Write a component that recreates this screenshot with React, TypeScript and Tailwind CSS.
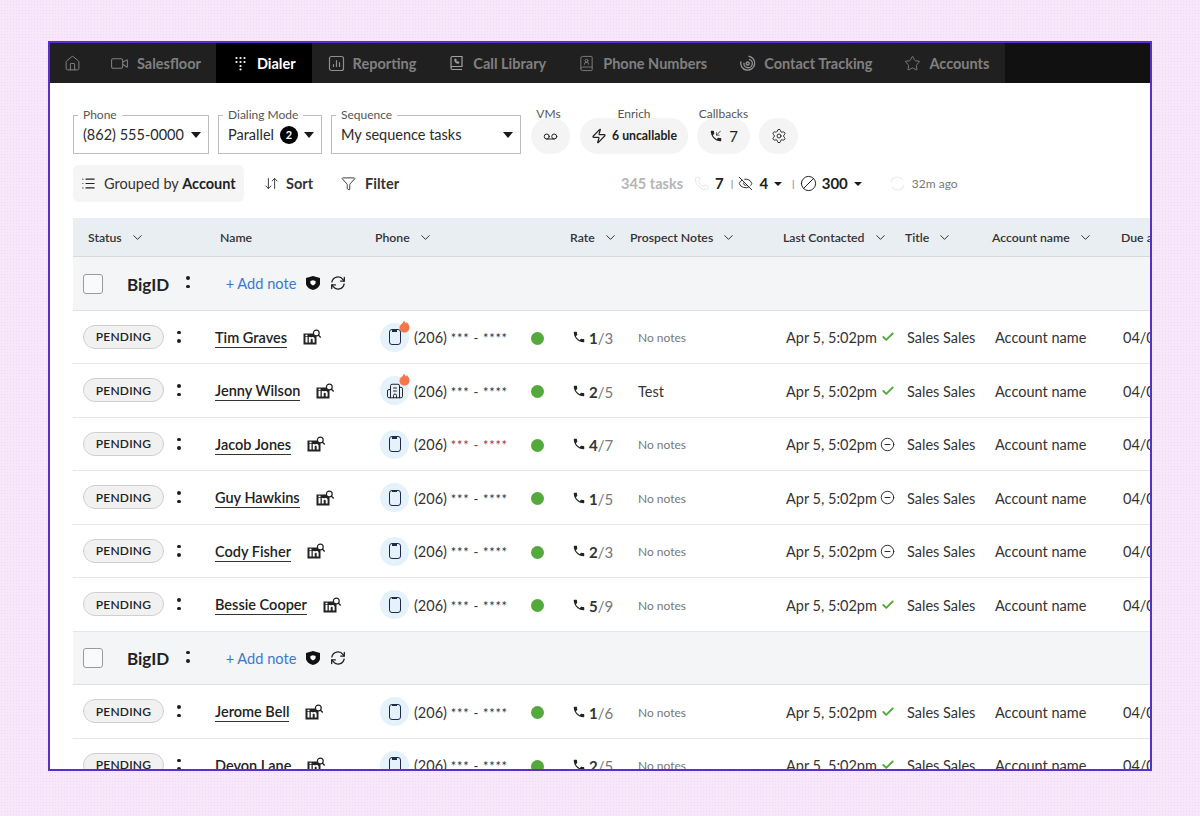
import { ReactNode } from "react";
import { Home, Video, BookUser, Star, Voicemail, Zap, Settings, List, ArrowDownUp, Filter, Building2, ChevronDown, Check, CircleMinus, EyeOff, Ban, Phone } from "lucide-react";
import { MdPhoneCallback, MdPhone } from "react-icons/md";

const Grip = () => (
  <svg width="17" height="17" viewBox="0 0 17 17" fill="white">
    {[3, 7, 11].map((x) => [3, 7].map((y) => <circle key={`${x}-${y}`} cx={x + 1.5} cy={y} r="1.1" />))}
    <circle cx="8.5" cy="11" r="1.1" />
    <circle cx="8.5" cy="14.5" r="1.1" />
  </svg>
);

const ChartBox = () => (
  <svg width="17" height="17" viewBox="0 0 17 17" fill="none" stroke="#909090" strokeWidth="1.2" strokeLinecap="round">
    <rect x="1.5" y="1.500" width="14" height="14" rx="2" />
    <path d="M5.500 11.500v-2M8.500 11.500v-6M11.500 11.500v-4" />
  </svg>
);

const CallBook = () => (
  <svg width="17" height="17" viewBox="0 0 17 17" fill="none" stroke="#a0a0a0" strokeWidth="1.2">
    <path d="M3 13V3a1.5 1.5 0 0 1 1.5-1.5H14v10H4.5A1.5 1.5 0 0 0 3 13a1.5 1.5 0 0 0 1.5 1.5H14" />
    <path d="M6.5 4.500c0 2.500 1.500 4 4 4l.7-1.300-1.600-.8-.6.6c-.5-.3-.8-.7-1-1.100l.6-.6-.8-1.600z" fill="#a0a0a0" strokeWidth="0.5" />
  </svg>
);

const Radar = () => (
  <svg width="17" height="17" viewBox="0 0 17 17" fill="none" stroke="#909090" strokeWidth="1.4">
    <path d="M9.500 1.200a7 7 0 1 1-7.600 5.200" />
    <path d="M10 4.400a4.200 4.200 0 1 1-5 3.400" />
    <circle cx="8.700" cy="8.500" r="1.500" />
  </svg>
);

const Sync = ({ size = 16 }: { size?: number }) => (
  <svg width={size} height={size} viewBox="0 0 17 17" fill="none" stroke="#222" strokeWidth="1.4" strokeLinecap="round" strokeLinejoin="round">
    <path d="M2 7.400a6.600 6.600 0 0 1 11.800-2.600L15 6.400" />
    <path d="M15.200 2.600v3.900h-3.900" />
    <path d="M15 9.600a6.600 6.600 0 0 1-11.800 2.600L2 10.600" />
    <path d="M1.800 14.400v-3.900h3.900" />
  </svg>
);

const Shield = () => (
  <svg width="16" height="16" viewBox="0 0 16 16">
    <path d="M8 1 15 3v5.200c0 3.200-3 5.600-7 6.800-4-1.200-7-3.600-7-6.800V3z" fill="#111" />
    <path d="M8 5.200 10.600 6v1.800c0 1.100-1 1.900-2.600 2.600-1.600-.7-2.600-1.500-2.600-2.600V6z" fill="#fff" />
  </svg>
);

const LinkedInSearch = () => (
  <svg width="19" height="16" viewBox="0 0 19 16" fill="none">
    <rect x="0.500" y="4.500" width="13" height="11" fill="#222" />
    <rect x="2.500" y="8" width="2" height="5.500" fill="#fff" />
    <rect x="2.500" y="5.700" width="2" height="1.600" fill="#fff" />
    <path d="M5.800 13.500V8h1.900v.8c.6-.8 3.900-1.400 3.900 1.300v3.400H9.700v-3c0-1-2-1-2 0v3z" fill="#fff" />
    <circle cx="13.300" cy="4" r="2.900" fill="#fff" stroke="#222" strokeWidth="1.200" />
    <path d="m15.300 6 2.400 2.400" stroke="#222" strokeWidth="1.400" />
  </svg>
);

const Flame = () => (
  <svg className="absolute -top-[3px] left-[19px]" width="11" height="13" viewBox="0 0 11 13">
    <path d="M5 0c.5 2 1 2.400 2 3.400.3-.4.5-.8.6-1.300C9.300 3.500 10.500 5.500 10.500 7.500c0 3-2.300 5-5 5s-5-2-5-4.800C.5 4.500 4.500 3.500 5 0z" fill="#f4764a" />
  </svg>
);

const Dots = () => (
  <span className="flex flex-col gap-[5px]">
    <span className="block h-[3.5px] w-[3.5px] rounded-full bg-[#1c1c1c]" />
    <span className="block h-[3.5px] w-[3.5px] rounded-full bg-[#1c1c1c]" />
  </span>
);

const Caret = () => <span className="inline-block h-0 w-0 border-x-[5px] border-t-[6px] border-x-transparent border-t-[#1a1a1a]" />;
const SmallCaret = () => <span className="inline-block h-0 w-0 border-x-[4px] border-t-[4px] border-x-transparent border-t-[#1a1a1a]" />;

const navItems = [
  { label: "Salesfloor", icon: <Video size={19} strokeWidth={1.3} />, pad: "pl-[16px] pr-[15px]" },
  { label: "Dialer", icon: <Grip />, active: true, pad: "px-[16px]" },
  { label: "Reporting", icon: <ChartBox />, pad: "px-[16px]" },
  { label: "Call Library", icon: <CallBook />, pad: "px-[16px]" },
  { label: "Phone Numbers", icon: <BookUser size={17} strokeWidth={1.3} />, pad: "px-[16px]" },
  { label: "Contact Tracking", icon: <Radar />, pad: "px-[16px]" },
  { label: "Accounts", icon: <Star size={17} strokeWidth={1.3} />, pad: "px-[16px]" },
];

function Nav() {
  return (
    <div className="flex h-[40px] bg-[#111111]">
      <div className="flex w-[44px] items-center justify-center bg-[#202020] pl-[1px] text-[#8a8a8a]">
        <Home size={17} strokeWidth={1.3} />
      </div>
      {navItems.map((n) => (
        <div
          key={n.label}
          className={`flex items-center gap-[8px] pt-[1px] text-[14.5px] font-bold ${n.pad} ${n.active ? "bg-black text-white" : "bg-[#202020] text-[#808080]"}`}
        >
          {n.icon}
          <span>{n.label}</span>
        </div>
      ))}
    </div>
  );
}

function Fieldset({ label, width, children }: { label: string; width: string; children: ReactNode }) {
  return (
    <div className={`relative flex h-[39px] items-center border border-[#bdbdbd] pl-[9px] pr-[7px] pt-[1px] text-[14.5px] text-[#2a2a2a] ${width}`}>
      <span className="absolute -top-[8px] left-[4px] bg-white px-[5px] text-[12px] leading-[14px] text-[#555]">{label}</span>
      {children}
    </div>
  );
}

function Pill({ label, labelPos = "left-0 right-0", className, children }: { label?: string; labelPos?: string; className: string; children: ReactNode }) {
  return (
    <div className={`relative flex h-[36px] items-center justify-center rounded-full bg-[#f4f4f4] text-[#222] ${className}`}>
      {label && <span className={`absolute -top-[11px] whitespace-nowrap text-center text-[12px] font-normal leading-[14px] text-[#555] ${labelPos}`}>{label}</span>}
      {children}
    </div>
  );
}

function Toolbar() {
  return (
    <div className="flex pl-[23px] pt-[32px]">
      <Fieldset label="Phone" width="w-[136px]">
        <span className="flex-1 whitespace-nowrap">(862) 555-0000</span>
        <Caret />
      </Fieldset>
      <Fieldset label="Dialing Mode" width="w-[104px] ml-[9px]">
        <span>Parallel</span>
        <span className="ml-[6px] flex h-[18px] w-[18px] items-center justify-center rounded-full bg-black text-[11px] font-bold text-white">2</span>
        <span className="ml-auto flex"><Caret /></span>
      </Fieldset>
      <Fieldset label="Sequence" width="w-[190px] ml-[9px]">
        <span className="flex-1 whitespace-nowrap">My sequence tasks</span>
        <Caret />
      </Fieldset>
      <div className="ml-[10px] flex items-start pt-[3px]">
        <Pill label="VMs" labelPos="left-0 right-[4px]" className="w-[39px]"><Voicemail size={15} strokeWidth={1.6} /></Pill>
        <Pill label="Enrich" className="ml-[10px] w-[108px] gap-[5px]">
          <Zap size={16} strokeWidth={1.8} />
          <span className="text-[12.25px] font-bold">6 uncallable</span>
        </Pill>
        <Pill label="Callbacks" className="ml-[9px] w-[53px] gap-[6px] text-[15px]">
          <MdPhoneCallback size={14} />
          <span>7</span>
        </Pill>
        <Pill className="ml-[9px] w-[39px]"><Settings size={16} strokeWidth={1.4} /></Pill>
      </div>
    </div>
  );
}

function FilterBar() {
  return (
    <div className="mt-[11px] flex h-[37px] items-center pl-[23px]">
      <div className="flex h-[37px] w-[171px] items-center gap-[8px] rounded-[6px] bg-[#f5f5f5] pl-[8px] text-[14.5px] text-[#333]">
        <List size={15} strokeWidth={1.8} className="text-[#222]" />
        <span className="whitespace-nowrap">Grouped by <b className="text-[#222]">Account</b></span>
      </div>
      <div className="ml-[20px] flex items-center gap-[7px] text-[14.5px] font-bold text-[#333]">
        <ArrowDownUp size={15} strokeWidth={1.5} />
        <span>Sort</span>
      </div>
      <div className="ml-[28px] flex items-center gap-[9px] text-[14.5px] font-bold text-[#333]">
        <Filter size={15} strokeWidth={1.5} />
        <span>Filter</span>
      </div>
      <div className="ml-[222px] flex items-center text-[14.5px] font-bold">
        <span className="text-[#b5b5b5]">345 tasks</span>
        <Phone size={15} strokeWidth={1.4} className="ml-[11px] text-[#e4e4e4]" />
        <span className="ml-[6px] text-[15px] text-[#222]">7</span>
        <span className="ml-[7px] text-[10px] text-[#999]">|</span>
        <EyeOff size={15} strokeWidth={1.5} className="ml-[5px] text-[#222]" />
        <span className="ml-[6px] text-[15px] text-[#222]">4</span>
        <span className="ml-[6px] flex"><SmallCaret /></span>
        <span className="ml-[10px] text-[10px] text-[#999]">|</span>
        <Ban size={17} strokeWidth={1.4} className="ml-[5px] -scale-x-100 text-[#222]" />
        <span className="ml-[5px] text-[15px] text-[#222]">300</span>
        <span className="ml-[6px] flex"><SmallCaret /></span>
        <svg width="17" height="17" viewBox="0 0 17 17" fill="none" stroke="#eeeeee" strokeWidth="1.3" className="ml-[27px]">
          <path d="M2 7.400a6.600 6.600 0 0 1 11.800-2.600M15 9.600a6.600 6.600 0 0 1-11.800 2.600" />
        </svg>
        <span className="ml-[6px] text-[12px] font-normal text-[#777]">32m ago</span>
      </div>
    </div>
  );
}

const cols = [
  { w: "w-[135px]", h: "Status", hp: "pl-[15px]", hasCh: true },
  { w: "w-[160px]", h: "Name", hp: "pl-[12px]", hasCh: false },
  { w: "w-[197px]", h: "Phone", hp: "pl-[7px]", hasCh: true },
  { w: "w-[60px]", h: "Rate", hp: "pl-[5px]", hasCh: true },
  { w: "w-[153px]", h: "Prospect Notes", hp: "pl-[5px]", hasCh: true },
  { w: "w-[122px]", h: "Last Contacted", hp: "pl-[5px]", hasCh: true },
  { w: "w-[87px]", h: "Title", hp: "pl-[5px]", hasCh: true },
  { w: "w-[129px]", h: "Account name", hp: "pl-[5px]", hasCh: true },
  { w: "w-[120px]", h: "Due at", hp: "pl-[5px]", hasCh: true },
];

function HeaderRow() {
  return (
    <div className="flex h-[39px] w-[1163px] items-center border-b border-[#d5dade] bg-[#e9eef2] pt-[2px] text-[12.25px] font-semibold text-[#333]">
      {cols.map((c) => (
        <div key={c.h} className={`flex shrink-0 items-center gap-[8px] whitespace-nowrap ${c.w} ${c.hp}`}>
          <span>{c.h}</span>
          {c.hasCh && <ChevronDown size={15} strokeWidth={1.6} className="-translate-y-[1px]" />}
        </div>
      ))}
    </div>
  );
}

function GroupRow() {
  return (
    <div className="flex h-[53.5px] w-[1163px] items-center border-b border-[#e0e0e0] bg-[#f3f5f7] pt-[2px]">
      <span className="-mt-[1px] ml-[10px] block h-[20px] w-[20px] rounded-[3px] border border-[#9a9a9a] bg-white/50" />
      <span className="ml-[24px] text-[17px] font-bold leading-none text-[#222]">BigID</span>
      <span className="ml-[17px] flex -translate-y-[2px]"><Dots /></span>
      <span className="ml-[36px] text-[14.6px] text-[#3b78d0]">+ Add note</span>
      <span className="ml-[9px] flex -translate-y-[1px]"><Shield /></span>
      <span className="ml-[9px] flex -translate-y-[1px]"><Sync /></span>
    </div>
  );
}

type RowData = { name: string; rate: string; total: string; status: "check" | "minus"; note?: string; building?: boolean; flame?: boolean; red?: boolean };

function DataRow({ r }: { r: RowData }) {
  return (
    <div className="flex h-[53.5px] w-[1163px] items-center border-b border-[#e6e6e6] bg-white pt-[3px] text-[14.5px] text-[#333]">
      <div className="-mt-[3px] flex w-[135px] shrink-0 items-center pl-[10px]">
        <span className="flex h-[24px] w-[81px] items-center justify-center rounded-full border border-[#cfcfcf] bg-[#f1f1f1] pt-[1px] text-[12px] font-semibold tracking-[0.2px] text-[#222]">PENDING</span>
        <span className="ml-[13px] flex"><Dots /></span>
      </div>
      <div className="flex w-[160px] shrink-0 items-center pl-[7px]">
        <span className="whitespace-nowrap border-b border-[#333] text-[14.5px] font-semibold leading-[18px] text-[#222]">{r.name}</span>
        <span className="ml-[16px] flex shrink-0 -translate-y-[1px]"><LinkedInSearch /></span>
      </div>
      <div className="flex w-[197px] shrink-0 items-center pl-[12px]">
        <span className="relative flex h-[29px] w-[29px] shrink-0 -translate-y-[1px] items-center justify-center rounded-full bg-[#e5f2fb]">
          {r.building ? <Building2 size={18} strokeWidth={1.3} className="text-[#222]" /> : (
            <span className="relative block h-[16px] w-[12px] rounded-[3px] border-[1.5px] border-[#1e2a4a]">
              <span className="absolute left-[2px] top-0 block h-[1.5px] w-[5px] bg-[#1e2a4a]" />
            </span>
          )}
          {r.flame && <Flame />}
        </span>
        <span className="ml-[5px] whitespace-nowrap">(206) <span className={`text-[13px] tracking-[0.7px] ${r.red ? "text-[#a33]" : ""}`}>*** - ****</span></span>
        <span className="ml-[23px] block h-[13px] w-[13px] shrink-0 rounded-full bg-[#53a93a]" />
      </div>
      <div className="flex w-[60px] shrink-0 items-center gap-[3px] pl-[7px]">
        <MdPhone size={14} className="-translate-y-[1px] text-[#222]" />
        <span className="text-[15px]"><b className="font-bold">{r.rate}</b><span className="text-[#777]">/{r.total}</span></span>
      </div>
      <div className={`w-[153px] shrink-0 pl-[13px] ${r.note ? "text-[14.5px]" : "text-[12px] text-[#777]"}`}>{r.note ?? "No notes"}</div>
      <div className="flex w-[122px] shrink-0 items-center gap-[4px] whitespace-nowrap pl-[8px]">
        <span>Apr 5, 5:02pm</span>
        {r.status === "check" ? <Check size={14} strokeWidth={3.2} className="-translate-y-[1px] text-[#53a93a]" /> : <CircleMinus size={15} strokeWidth={1.5} className="-ml-[1px] -translate-y-[1px] text-[#222]" />}
      </div>
      <div className="w-[87px] shrink-0 whitespace-nowrap pl-[7px]">Sales Sales</div>
      <div className="w-[129px] shrink-0 whitespace-nowrap pl-[8px]">Account name</div>
      <div className="w-[120px] shrink-0 whitespace-nowrap pl-[7px]">04/01/2024</div>
    </div>
  );
}

const firstRows: RowData[] = [
  { name: "Tim Graves", rate: "1", total: "3", status: "check", flame: true },
  { name: "Jenny Wilson", rate: "2", total: "5", status: "check", note: "Test", building: true, flame: true },
  { name: "Jacob Jones", rate: "4", total: "7", status: "minus", red: true },
  { name: "Guy Hawkins", rate: "1", total: "5", status: "minus" },
  { name: "Cody Fisher", rate: "2", total: "3", status: "minus" },
  { name: "Bessie Cooper", rate: "5", total: "9", status: "check" },
];
const secondRows: RowData[] = [
  { name: "Jerome Bell", rate: "1", total: "6", status: "check" },
  { name: "Devon Lane", rate: "2", total: "5", status: "check" },
];

export default function App() {
  return (
    <div className="h-[816px] w-[1200px] overflow-hidden bg-[#f8e6fb] bg-[radial-gradient(#f1d8f6_0.7px,transparent_0.8px)] bg-[length:3px_3px] px-[48px] pt-[41px] font-['Lato',sans-serif]">
      <div className="h-[730px] w-[1104px] overflow-hidden border-2 border-[#5a2fc9] bg-white">
        <Nav />
        <Toolbar />
        <FilterBar />
        <div className="ml-[23px] mt-[16px]">
          <HeaderRow />
          <GroupRow />
          {firstRows.map((r) => <DataRow key={r.name} r={r} />)}
          <GroupRow />
          {secondRows.map((r) => <DataRow key={r.name} r={r} />)}
        </div>
      </div>
    </div>
  );
}
